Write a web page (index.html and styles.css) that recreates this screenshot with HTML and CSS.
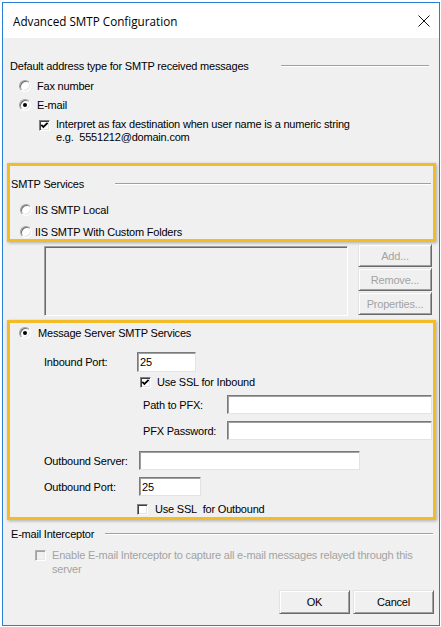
FILE: index.html
```html
<!DOCTYPE html>
<html>
<head>
<meta charset="utf-8">
<title>Advanced SMTP Configuration</title>
<link rel="stylesheet" href="styles.css">
</head>
<body>
<div class="window">
  <div class="titlebar">
    <span class="title">Advanced SMTP Configuration</span>
    <svg class="close" width="12" height="12" viewBox="0 0 12 12"><path d="M0.5 0.5 L11.5 11.5 M11.5 0.5 L0.5 11.5" stroke="#111" stroke-width="1" fill="none"/></svg>
  </div>
  <div class="content">
    <div class="group-head head-default">
      <span>Default address type for SMTP received messages</span>
      <span class="rule"></span>
    </div>
    <div class="opt opt-fax"><span class="radio"></span><span>Fax number</span></div>
    <div class="opt opt-email"><span class="radio on"></span><span>E-mail</span></div>
    <div class="opt-multi opt-interpret">
      <span class="check on"><svg width="9" height="9" viewBox="0 0 9 9"><polyline points="1.3,3.8 3.4,6 7.6,1.8" fill="none" stroke="#000" stroke-width="1.8"/></svg></span>
      <span>Interpret as fax destination when user name is a numeric string<br>e.g.&nbsp; 5551212@domain.com</span>
    </div>

    <div class="hl hl-services">
      <div class="group-head head-services">
        <span>SMTP Services</span>
        <span class="rule"></span>
      </div>
      <div class="opt opt-iis-local"><span class="radio"></span><span>IIS SMTP Local</span></div>
      <div class="opt opt-iis-custom"><span class="radio"></span><span>IIS SMTP With Custom Folders</span></div>
    </div>

    <div class="list-row">
      <div class="listbox"></div>
      <div class="side-buttons">
        <button class="btn" disabled>Add...</button>
        <button class="btn" disabled>Remove...</button>
        <button class="btn" disabled>Properties...</button>
      </div>
    </div>

    <div class="hl hl-msg">
      <div class="opt opt-msg"><span class="radio on"></span><span>Message Server SMTP Services</span></div>
      <div class="field-row row-inport">
        <span class="lbl lbl-main">Inbound Port:</span>
        <input class="field f-inport" type="text" value="25">
      </div>
      <div class="opt opt-sslin">
        <span class="check on"><svg width="9" height="9" viewBox="0 0 9 9"><polyline points="1.3,3.8 3.4,6 7.6,1.8" fill="none" stroke="#000" stroke-width="1.8"/></svg></span>
        <span>Use SSL for Inbound</span>
      </div>
      <div class="field-row row-pfx">
        <span class="lbl lbl-sub">Path to PFX:</span>
        <input class="field f-pfx" type="text" value="">
      </div>
      <div class="field-row row-pfxpw">
        <span class="lbl lbl-sub">PFX Password:</span>
        <input class="field f-pfx" type="text" value="">
      </div>
      <div class="field-row row-outsrv">
        <span class="lbl lbl-out">Outbound Server:</span>
        <input class="field f-outsrv" type="text" value="">
      </div>
      <div class="field-row row-outport">
        <span class="lbl lbl-out">Outbound Port:</span>
        <input class="field f-outport" type="text" value="25">
      </div>
      <div class="opt opt-sslout">
        <span class="check"></span>
        <span>Use SSL&nbsp; for Outbound</span>
      </div>
    </div>

    <div class="group-head head-interceptor">
      <span>E-mail Interceptor</span>
      <span class="rule"></span>
    </div>
    <div class="opt-multi opt-enable disabled">
      <span class="check off"></span>
      <span>Enable E-mail Interceptor to capture all e-mail messages relayed through this<br>server</span>
    </div>

    <div class="footer">
      <button class="btn btn-ok">OK</button>
      <button class="btn btn-cancel">Cancel</button>
    </div>
  </div>
</div>
</body>
</html>
```

FILE: styles.css
```css
html, body {
  margin: 0;
  padding: 0;
  background: #ffffff;
}

.window {
  margin: 2px 1px 0 2px;
  width: 436px;
  height: 622px;
  border: 1px solid #2a7fd4;
  display: flex;
  flex-direction: column;
  background: #f0f0f0;
  overflow: hidden;
}

.titlebar {
  height: 35px;
  flex: none;
  background: #ffffff;
  display: flex;
  align-items: center;
  justify-content: space-between;
  padding: 0 9px 0 10px;
}

.title {
  font-family: "Open Sans", "Noto Sans", sans-serif;
  font-size: 11.7px;
  color: #000;
  margin-top: 1px;
}

.close {
  display: block;
  margin-top: 1px;
}

.content {
  flex: 1;
  display: flex;
  flex-direction: column;
  font-family: "Liberation Sans", Arial, sans-serif;
  font-size: 11px;
  letter-spacing: -0.2px;
  color: #000;
  line-height: 14px;
}

/* group headings with etched rule */
.group-head {
  display: flex;
  align-items: center;
  height: 14px;
  white-space: nowrap;
}

.rule {
  flex: 1;
  height: 0;
  border-top: 1px solid #a0a0a0;
  border-bottom: 1px solid #ffffff;
}

.head-default { margin: 21px 0 0 7px; }
.head-default .rule { margin: 0 10px 0 32px; }

.head-services { margin: 11px 0 0 1px; }
.head-services .rule { margin: 0 2px 0 31px; }

.head-interceptor { margin: 7px 0 0 8px; }
.head-interceptor .rule { margin: 0 6px 0 11px; }

/* options */
.opt {
  display: flex;
  align-items: center;
  height: 14px;
  gap: 6px;
  white-space: nowrap;
}

.opt-multi {
  display: flex;
  align-items: flex-start;
  gap: 6px;
  white-space: nowrap;
}

.opt-multi .check { margin-top: 2px; }

.opt-fax { margin: 6px 0 0 16px; }
.opt-email { margin: 5px 0 0 16px; }
.opt-interpret { margin: 6px 0 0 36px; line-height: 13px; }

.opt-iis-local { margin: 12px 0 0 10px; gap: 3px; }
.opt-iis-custom { margin: 8px 0 0 10px; gap: 3px; }

.opt-msg { margin: 3px 0 0 9px; gap: 7px; }
.opt-sslin { margin: 3px 0 0 130px; }
.opt-sslout { margin: 6px 0 0 127px; gap: 7px; }

.opt-enable { margin: 7px 0 0 32px; line-height: 14px; }
.disabled { color: #a3a3a3; }

/* radio */
.radio {
  flex: none;
  position: relative;
  box-sizing: border-box;
  width: 12px;
  height: 12px;
  border-radius: 50%;
  border: 1px solid;
  border-color: #a0a0a0 #ffffff #ffffff #a0a0a0;
  background: #ffffff;
  box-shadow: inset 1px 1px 0 #707070, inset -1px -1px 0 #e3e3e3;
}

.radio.on::after {
  content: "";
  position: absolute;
  left: 3px;
  top: 3px;
  width: 4px;
  height: 4px;
  border-radius: 50%;
  background: #000;
}

/* checkbox */
.check {
  flex: none;
  box-sizing: border-box;
  width: 11px;
  height: 11px;
  border: 1px solid;
  border-color: #808080 #ffffff #ffffff #808080;
  box-shadow: inset 1px 1px 0 #404040, inset -1px -1px 0 #e3e3e3;
  background: #ffffff;
}

.check svg { display: block; }

.check.off {
  background: #f0f0f0;
  border-color: #b0b0b0 #ffffff #ffffff #b0b0b0;
  box-shadow: inset 1px 1px 0 #a0a0a0, inset -1px -1px 0 #e8e8e8;
}

/* highlight annotation boxes */
.hl {
  border: 3px solid #f3bc25;
  box-shadow: 1px 1px 3px rgba(0, 0, 0, 0.28);
  display: flex;
  flex-direction: column;
}

.hl-services {
  margin: 19px 3px 0 4px;
}

.hl-msg {
  margin: 4px 3px 0 4px;
  padding-bottom: 1px;
}

/* list + side buttons */
.list-row {
  display: flex;
  margin-top: 2px;
}

.listbox {
  margin: 2px 0 0 41px;
  width: 304px;
  height: 70px;
  box-sizing: border-box;
  border: 1px solid;
  border-color: #a0a0a0 #ffffff #ffffff #a0a0a0;
  box-shadow: inset 1px 1px 0 #696969;
  background: #f0f0f0;
}

.side-buttons {
  display: flex;
  flex-direction: column;
  gap: 1px;
  margin-left: 10px;
  width: 74px;
}

.btn {
  box-sizing: border-box;
  height: 23px;
  padding: 0;
  margin: 0;
  font-family: "Liberation Sans", Arial, sans-serif;
  font-size: 11px;
  letter-spacing: -0.2px;
  color: #000;
  background: #f0f0f0;
  border: 1px solid;
  border-color: #e3e3e3 #696969 #696969 #e3e3e3;
  box-shadow: inset 1px 1px 0 #ffffff, inset -1px -1px 0 #a0a0a0;
  border-radius: 0;
}

.btn:disabled { color: #a3a3a3; }

/* field rows */
.field-row {
  display: flex;
  align-items: center;
}

.lbl { white-space: nowrap; flex: none; }
.lbl-main { margin-left: 34px; width: 93px; }
.lbl-sub { margin-left: 133px; width: 84px; }
.lbl-out { margin-left: 34px; width: 95px; }

.row-inport { margin-top: 12px; }
.row-pfx { margin-top: 6px; }
.row-pfxpw { margin-top: 7px; }
.row-outsrv { margin-top: 11px; }
.row-outport { margin-top: 7px; }

.field {
  box-sizing: border-box;
  height: 19px;
  margin: 0;
  padding: 0 2px;
  font-family: "Liberation Sans", Arial, sans-serif;
  font-size: 11px;
  color: #000;
  background: #ffffff;
  border: 1px solid;
  border-color: #7a7a7a #e3e3e3 #e3e3e3 #7a7a7a;
  box-shadow: inset 1px 1px 0 #a0a0a0;
  border-radius: 0;
  outline: none;
}

.f-inport { width: 59px; height: 20px; }
.f-pfx { width: 205px; }
.f-outsrv { width: 221px; }
.f-outport { width: 62px; }

/* footer */
.footer {
  display: flex;
  justify-content: flex-end;
  gap: 3px;
  margin: 14px 5px 0 0;
}

.btn-ok { width: 71px; height: 24px; }
.btn-cancel { width: 81px; height: 24px; }
```
